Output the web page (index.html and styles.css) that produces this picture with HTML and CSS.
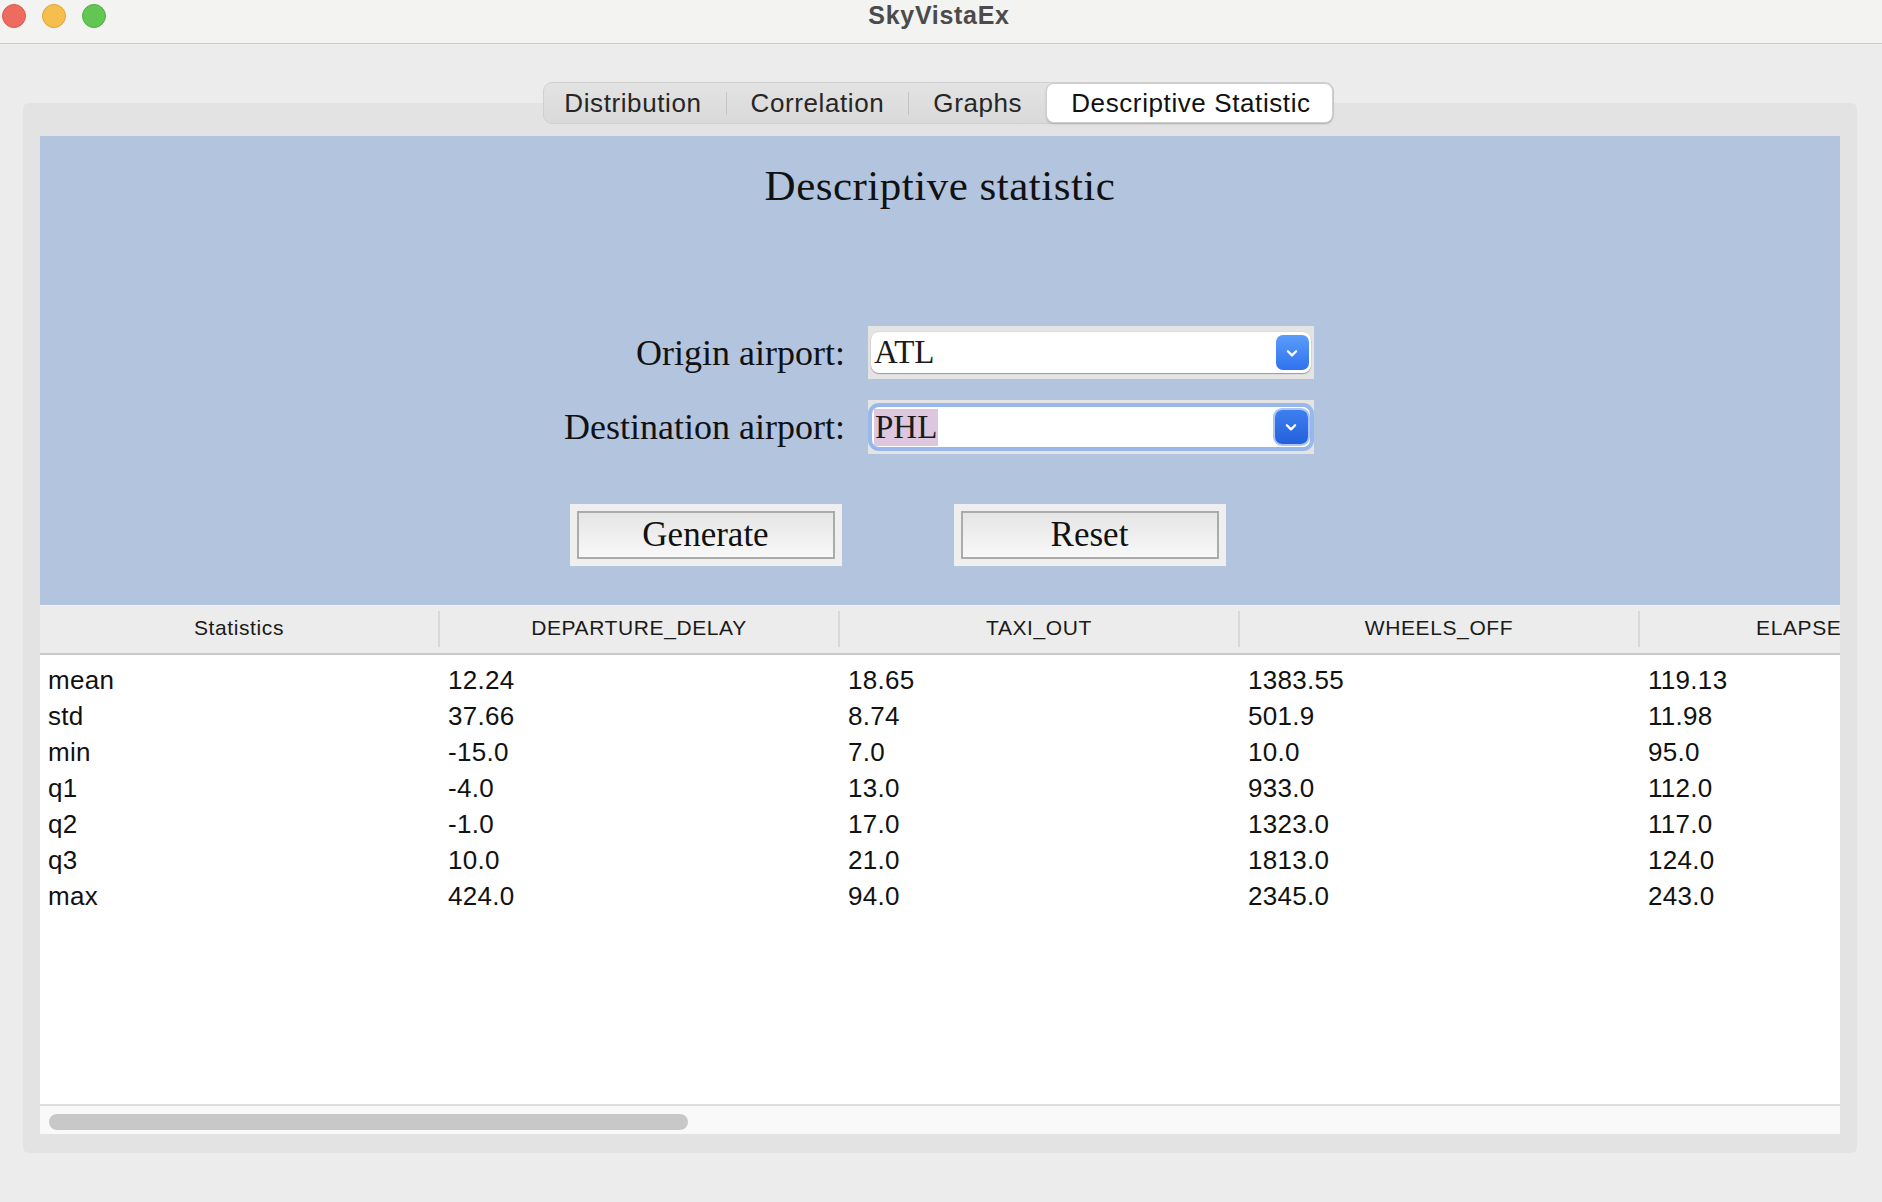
FILE: index.html
```html
<!DOCTYPE html>
<html>
<head>
<meta charset="utf-8">
<title>SkyVistaEx</title>
<link rel="stylesheet" href="styles.css">
</head>
<body>
<div class="window">
  <header class="titlebar">
    <div class="lights">
      <span class="light red"></span>
      <span class="light yellow"></span>
      <span class="light green"></span>
    </div>
    <div class="title">SkyVistaEx</div>
    <div></div>
  </header>

  <main class="main">
    <nav class="tabbar">
      <div class="tab">Distribution</div>
      <span class="sep"></span>
      <div class="tab">Correlation</div>
      <span class="sep"></span>
      <div class="tab">Graphs</div>
      <div class="tab selected">Descriptive Statistic</div>
    </nav>

    <section class="panel">
      <div class="form-area">
        <h1 class="heading">Descriptive statistic</h1>
        <div class="form-grid">
          <label class="label">Origin airport:</label>
          <div class="combo">
            <div class="field">
              <span class="value">ATL</span>
              <span class="arrow"><svg viewBox="0 0 14 14" width="18" height="18"><path d="M3.8 5.6 L7 8.8 L10.2 5.6" fill="none" stroke="#fff" stroke-width="1.8" stroke-linecap="round" stroke-linejoin="round"/></svg></span>
            </div>
          </div>
          <label class="label">Destination airport:</label>
          <div class="combo focused">
            <div class="field">
              <span class="value"><span class="sel">PHL</span></span>
              <span class="arrow"><svg viewBox="0 0 14 14" width="18" height="18"><path d="M3.8 5.6 L7 8.8 L10.2 5.6" fill="none" stroke="#fff" stroke-width="1.8" stroke-linecap="round" stroke-linejoin="round"/></svg></span>
            </div>
          </div>
        </div>
        <div class="buttons">
          <div class="btn-frame"><button class="btn">Generate</button></div>
          <div class="btn-frame"><button class="btn">Reset</button></div>
        </div>
      </div>

      <div class="table">
        <div class="thead">
          <div class="th first">Statistics</div>
          <div class="th">DEPARTURE_DELAY</div>
          <div class="th">TAXI_OUT</div>
          <div class="th">WHEELS_OFF</div>
          <div class="th">ELAPSED_TIME</div>
        </div>
        <div class="tbody">
          <div class="tr"><div class="td first">mean</div><div class="td">12.24</div><div class="td">18.65</div><div class="td">1383.55</div><div class="td">119.13</div></div>
          <div class="tr"><div class="td first">std</div><div class="td">37.66</div><div class="td">8.74</div><div class="td">501.9</div><div class="td">11.98</div></div>
          <div class="tr"><div class="td first">min</div><div class="td">-15.0</div><div class="td">7.0</div><div class="td">10.0</div><div class="td">95.0</div></div>
          <div class="tr"><div class="td first">q1</div><div class="td">-4.0</div><div class="td">13.0</div><div class="td">933.0</div><div class="td">112.0</div></div>
          <div class="tr"><div class="td first">q2</div><div class="td">-1.0</div><div class="td">17.0</div><div class="td">1323.0</div><div class="td">117.0</div></div>
          <div class="tr"><div class="td first">q3</div><div class="td">10.0</div><div class="td">21.0</div><div class="td">1813.0</div><div class="td">124.0</div></div>
          <div class="tr"><div class="td first">max</div><div class="td">424.0</div><div class="td">94.0</div><div class="td">2345.0</div><div class="td">243.0</div></div>
        </div>
        <div class="hscroll"><div class="thumb"></div></div>
      </div>
    </section>
  </main>
</div>
</body>
</html>
```

FILE: styles.css
```css
* { box-sizing: border-box; }
html, body { margin: 0; padding: 0; }
body {
  width: 1882px;
  height: 1202px;
  background: #ececec;
  font-family: "Liberation Sans", Arial, sans-serif;
  overflow: hidden;
}

.titlebar {
  height: 44px;
  background: #f3f3f1;
  border-bottom: 1px solid #cbcbcb;
  display: grid;
  grid-template-columns: 1fr auto 1fr;
  align-items: start;
}
.lights {
  display: flex;
  gap: 16px;
  padding: 4px 0 0 2px;
}
.light {
  width: 24px;
  height: 24px;
  border-radius: 50%;
  display: block;
}
.red { background: #ee6b5f; border: 1px solid #d9594e; }
.yellow { background: #f6be4f; border: 1px solid #dfa53a; }
.green { background: #62c554; border: 1px solid #4fae43; }
.title {
  font-weight: bold;
  font-size: 25px;
  letter-spacing: 0.7px;
  color: #4b4b4b;
  padding-top: 1px;
  line-height: 28px;
  margin-left: -4px;
}

.main {
  padding: 38px 25px 0 23px;
  display: flex;
  flex-direction: column;
}

.tabbar {
  align-self: center;
  position: relative;
  z-index: 1;
  margin-bottom: -21px;
  margin-left: -3px;
  height: 42px;
  display: flex;
  align-items: center;
  background: linear-gradient(#e3e3e3, #d9d9d9);
  border: 1px solid #d0d0d0;
  border-radius: 9px;
  padding: 0;
}
.tab {
  font-size: 26px;
  letter-spacing: 0.6px;
  color: #262626;
  padding: 0 24px;
  height: 40px;
  line-height: 40px;
  white-space: nowrap;
}
.tab:first-child { padding-left: 20px; }
.tab.selected {
  background: #fff;
  color: #111;
  border-radius: 8px;
  border: 1px solid #cfcfcf;
  box-shadow: 0 1px 2px rgba(0,0,0,0.18);
  line-height: 38px;
  padding: 0 21px 0 24px;
}
.sep {
  width: 1px;
  height: 23px;
  background: #c4c4c4;
}

.panel {
  background: #e3e3e3;
  border-radius: 6px;
  padding: 33px 17px 19px 17px;
}

.form-area {
  background: #b3c4de;
  height: 469px;
  padding-top: 26px;
  display: flex;
  flex-direction: column;
  align-items: center;
}
.heading {
  margin: 0;
  font-family: "Liberation Serif", "Times New Roman", serif;
  font-weight: normal;
  font-size: 43px;
  letter-spacing: 0.5px;
  line-height: 48px;
  color: #111;
}

.form-grid {
  margin-top: 116px;
  display: grid;
  grid-template-columns: auto 446px;
  column-gap: 23px;
  row-gap: 21px;
  align-items: center;
  margin-left: -2px;
}
.label {
  font-family: "Liberation Serif", "Times New Roman", serif;
  font-size: 36px;
  color: #111;
  text-align: right;
  white-space: nowrap;
}
.combo {
  background: #e4e4e4;
  height: 53px;
  padding: 6px 3px;
}
.field {
  height: 41px;
  background: #fff;
  border-radius: 8px;
  box-shadow: 0 1px 1px rgba(0,0,0,0.3), 0 0 0 0.5px rgba(0,0,0,0.08);
  display: flex;
  align-items: center;
  justify-content: space-between;
  padding: 0 2px 0 3px;
}
.value {
  font-family: "Liberation Serif", "Times New Roman", serif;
  font-size: 33px;
  color: #1a1a1a;
  line-height: 37px;
}
.arrow {
  width: 33px;
  height: 35px;
  border-radius: 7px;
  background: linear-gradient(#5b9df9, #2f72ef);
  display: flex;
  align-items: center;
  justify-content: center;
}
.combo.focused {
  height: 54px;
  padding: 7px 4px;
}
.combo.focused .field {
  height: 40px;
  box-shadow: 0 0 0 4px rgba(110, 158, 236, 0.65);
  border-radius: 7px;
  padding-left: 2px;
}
.combo.focused .arrow {
  background: linear-gradient(#3d7fef, #2560dc);
  box-shadow: 0 0 0 2px rgba(110, 158, 236, 0.6);
  height: 34px;
}
.sel {
  background: #dcc7df;
  padding: 0 1px;
  display: inline-block;
  line-height: 37px;
}

.buttons {
  margin-top: 50px;
  display: flex;
  gap: 112px;
  padding-right: 85px;
}
.btn-frame {
  background: #efefef;
  width: 272px;
  height: 62px;
  padding: 7px;
}
.btn {
  width: 100%;
  height: 100%;
  border: 2px solid #ababab;
  background: linear-gradient(#e5e5e5, #f8f8f8);
  font-family: "Liberation Serif", "Times New Roman", serif;
  font-size: 35px;
  color: #111;
  padding: 0;
  margin: 0;
  line-height: 44px;
}

.table {
  background: #fff;
  overflow: hidden;
  height: 529px;
  display: flex;
  flex-direction: column;
}
.thead {
  display: flex;
  height: 50px;
  background: #ececec;
  border-top: 1px solid #f4f4f4;
  border-bottom: 2px solid #c9c9c9;
  flex-shrink: 0;
}
.th {
  flex: 0 0 400px;
  width: 400px;
  height: 36px;
  margin-top: 5px;
  font-size: 21px;
  letter-spacing: 0.6px;
  color: #1a1a1a;
  text-align: center;
  line-height: 34px;
  border-left: 2px solid #d8d8d8;
  white-space: nowrap;
  overflow: hidden;
}
.th.first {
  flex-basis: 398px;
  width: 398px;
  border-left: none;
}
.tbody {
  flex: 1;
  padding-top: 8px;
}
.tr {
  display: flex;
  height: 36px;
}
.td {
  flex: 0 0 400px;
  width: 400px;
  padding-left: 10px;
  font-size: 26px;
  letter-spacing: 0.3px;
  line-height: 35px;
  color: #111;
  white-space: nowrap;
}
.td.first {
  flex-basis: 398px;
  width: 398px;
  padding-left: 8px;
}
.hscroll {
  height: 30px;
  border-top: 2px solid #dedede;
  background: #f9f9f9;
  padding: 8px 0 0 9px;
  flex-shrink: 0;
}
.thumb {
  width: 639px;
  height: 16px;
  border-radius: 8px;
  background: #c8c8c8;
}
```
